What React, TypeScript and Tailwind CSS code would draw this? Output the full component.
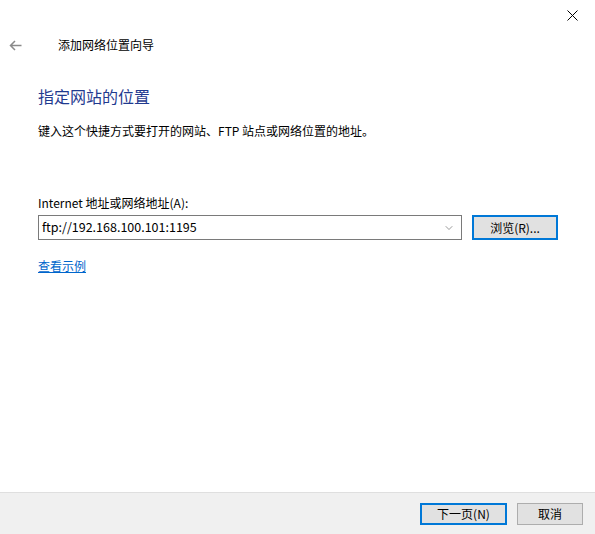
import { ChevronDown } from "lucide-react";

const font = { fontFamily: '"Noto Sans CJK SC", "Noto Sans", sans-serif' };

export default function App() {
  return (
    <div className="flex h-[534px] w-[595px] flex-col bg-white text-[12px] text-[#000]" style={font}>
      <div className="flex h-[30px] justify-end">
        <div className="flex h-[30px] w-[46px] items-center justify-center">
          <svg width="11" height="11" viewBox="0 0 11 11">
            <path d="M0.5 0.5 L10.5 10.5 M10.5 0.5 L0.5 10.5" stroke="#000" strokeWidth="1" />
          </svg>
        </div>
      </div>
      <div className="flex h-[30px] items-center">
        <div className="flex w-[58px] pl-[9px]">
          <svg width="13" height="11" viewBox="0 0 13 11">
            <path d="M12.5 5.5 H1.5 M6 1 L1.5 5.5 L6 10" stroke="#8a8a8a" strokeWidth="1.5" fill="none" />
          </svg>
        </div>
        <span className="leading-none">添加网络位置向导</span>
      </div>
      <div className="flex flex-1 flex-col pl-[38px] pr-[37px]">
        <h1 className="mt-[25px] text-[16px] leading-[22px] text-[#1f3a8f]">指定网站的位置</h1>
        <p className="mt-[16px] leading-[16px]">键入这个快捷方式要打开的网站、FTP 站点或网络位置的地址。</p>
        <label className="mt-[56px] leading-[16px]">Internet 地址或网络地址(A):</label>
        <div className="mt-[4px] flex items-center gap-[10px]">
          <div className="flex h-[25px] w-[424px] items-center border border-[#7a7a7a] pl-[3px] pr-[6px]">
            <span className="flex-1 text-[12.5px]">ftp://192.168.100.101:1195</span>
            <ChevronDown size={12} strokeWidth={1.2} className="text-[#555]" />
          </div>
          <div className="flex h-[25px] w-[86px] items-center justify-center border-2 border-[#0078d7] bg-[#e1e1e1]">
            浏览(R)...
          </div>
        </div>
        <a className="mt-[18px] w-fit leading-[16px] text-[#0066cc] underline">查看示例</a>
      </div>
      <div className="flex h-[42px] items-center justify-end gap-[10px] border-t border-[#dfdfdf] bg-[#f0f0f0] pr-[12px]">
        <div className="flex h-[22px] w-[87px] items-center justify-center border-2 border-[#0078d7] bg-[#e1e1e1]">
          下一页(N)
        </div>
        <div className="flex h-[22px] w-[66px] items-center justify-center border border-[#adadad] bg-[#e1e1e1]">
          取消
        </div>
      </div>
    </div>
  );
}
